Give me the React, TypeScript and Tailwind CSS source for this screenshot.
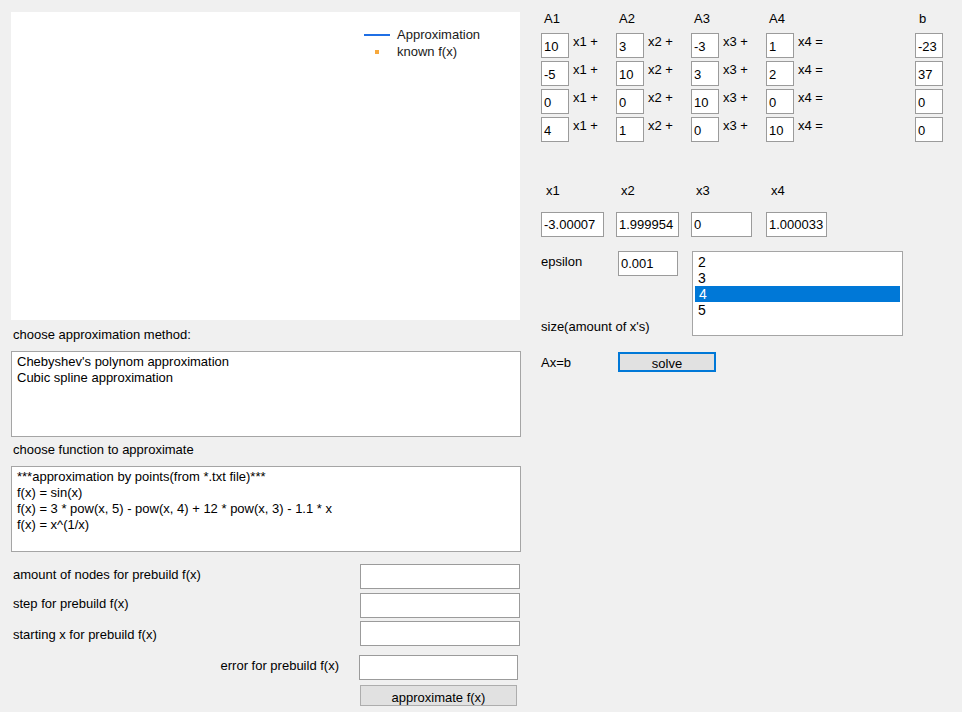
import React from 'react';

const tb = 'border border-[#9b9b9b] bg-white h-[25px] px-[2px] flex items-center leading-none';

function MatrixCell({ value, label }: { value: string; label?: string }) {
  return (
    <div className="flex items-start w-[75px] shrink-0">
      <div className="border border-[#9b9b9b] bg-white w-[28px] h-[25px] pl-[2px] pt-[5px] leading-[16px]">{value}</div>
      {label && <span className="ml-[4px] pt-[1px] whitespace-nowrap leading-[16px]">{label}</span>}
    </div>
  );
}

const matrix = [
  ['10', '3', '-3', '1', '-23'],
  ['-5', '10', '3', '2', '37'],
  ['0', '0', '10', '0', '0'],
  ['4', '1', '0', '10', '0'],
];

export default function App() {
  return (
    <div className="w-[962px] h-[712px] bg-[#f0f0f0] text-[13px] text-black font-['Liberation_Sans',Arial,sans-serif] flex overflow-hidden">
      {/* left side */}
      <div className="pl-[11px] pt-[12px] w-[541px] shrink-0 flex flex-col">
        <div className="relative w-[509px] h-[308px] bg-white">
          <div className="absolute left-[353px] top-[14px] flex flex-col leading-[17px] text-[#1a1a1a]">
            <div className="flex items-center gap-[7px]">
              <span className="block w-[26px] h-[2px] bg-[#1f6fe5]" />
              <span>Approximation</span>
            </div>
            <div className="flex items-center gap-[7px]">
              <span className="w-[26px] flex justify-center">
                <span className="block w-[4px] h-[4px] bg-[#f7a83c]" />
              </span>
              <span>known f(x)</span>
            </div>
          </div>
        </div>

        <div className="mt-[7px] ml-[2px] leading-[16px]">choose approximation method:</div>
        <div className="mt-[8px] w-[510px] h-[86px] border border-[#a5a5a5] bg-white px-[5px] pt-[2px] leading-[16px]">
          <div>Chebyshev's polynom approximation</div>
          <div>Cubic spline approximation</div>
        </div>

        <div className="mt-[5px] ml-[2px] leading-[16px]">choose function to approximate</div>
        <div className="mt-[8px] w-[510px] h-[86px] border border-[#a5a5a5] bg-white px-[5px] pt-[2px] leading-[16px]">
          <div>***approximation by points(from *.txt file)***</div>
          <div>f(x) = sin(x)</div>
          <div>f(x) = 3 * pow(x, 5) - pow(x, 4) + 12 * pow(x, 3) - 1.1 * x</div>
          <div>f(x) = x^(1/x)</div>
        </div>

        <div className="mt-[12px] flex items-start">
          <div className="w-[349px] pl-[2px] pt-[3px] leading-[16px]">amount of nodes for prebuild f(x)</div>
          <div className={tb + ' w-[160px]'} />
        </div>
        <div className="mt-[4px] flex items-start">
          <div className="w-[349px] pl-[2px] pt-[3px] leading-[16px]">step for prebuild f(x)</div>
          <div className={tb + ' w-[160px]'} />
        </div>
        <div className="mt-[3px] flex items-start">
          <div className="w-[349px] pl-[2px] pt-[6px] leading-[16px]">starting x for prebuild f(x)</div>
          <div className={tb + ' w-[160px]'} />
        </div>
        <div className="mt-[9px] flex items-start">
          <div className="w-[348px] pr-[20px] pt-[3px] leading-[16px] text-right">error for prebuild f(x)</div>
          <div className={tb + ' w-[159px]'} />
        </div>
        <div className="mt-[5px] ml-[349px] w-[157px] h-[21px] border border-[#adadad] bg-[#e1e1e1] flex justify-center overflow-hidden leading-[16px] pt-[4px]">
          approximate f(x)
        </div>
      </div>

      {/* right side */}
      <div className="pt-[11px] flex flex-col">
        <div className="flex leading-[16px]">
          <span className="w-[75px] pl-[3px]">A1</span>
          <span className="w-[75px] pl-[3px]">A2</span>
          <span className="w-[75px] pl-[3px]">A3</span>
          <span className="w-[149px] pl-[3px]">A4</span>
          <span className="pl-[4px]">b</span>
        </div>
        <div className="mt-[6px] flex flex-col">
          {matrix.map((r, i) => (
            <div key={i} className="h-[28px] flex">
              <MatrixCell value={r[0]} label="x1 +" />
              <MatrixCell value={r[1]} label="x2 +" />
              <MatrixCell value={r[2]} label="x3 +" />
              <div className="w-[149px] shrink-0">
                <MatrixCell value={r[3]} label="x4 =" />
              </div>
              <MatrixCell value={r[4]} />
            </div>
          ))}
        </div>

        <div className="mt-[38px] flex leading-[16px]">
          <span className="w-[75px] pl-[5px]">x1</span>
          <span className="w-[75px] pl-[5px]">x2</span>
          <span className="w-[75px] pl-[5px]">x3</span>
          <span className="w-[75px] pl-[5px]">x4</span>
        </div>
        <div className="mt-[13px] flex">
          <div className="w-[75px]"><div className={tb + ' w-[63px] overflow-hidden whitespace-nowrap'}>-3.00007</div></div>
          <div className="w-[75px]"><div className={tb + ' w-[63px] overflow-hidden whitespace-nowrap'}>1.999954</div></div>
          <div className="w-[75px]"><div className={tb + ' w-[61px] overflow-hidden whitespace-nowrap'}>0</div></div>
          <div className="w-[75px]"><div className={tb + ' w-[61px] overflow-hidden whitespace-nowrap'}>1.000033</div></div>
        </div>

        <div className="mt-[14px] flex items-start">
          <div className="w-[76px] h-[85px] flex flex-col justify-between leading-[16px] pt-[3px] pb-[1px]">
            <span>epsilon</span>
            <span className="whitespace-nowrap">size(amount of x's)</span>
          </div>
          <div className={tb + ' ml-[1px] w-[60px] h-[24px]'}>0.001</div>
          <div className="ml-[14px] w-[211px] h-[85px] border border-[#a5a5a5] bg-white p-[1px] pt-[2px] text-[14px] leading-[16px]">
            <div className="pl-[4px]">2</div>
            <div className="pl-[4px]">3</div>
            <div className="pl-[4px] mx-[1px] bg-[#0078d7] text-white">4</div>
            <div className="pl-[4px]">5</div>
          </div>
        </div>

        <div className="mt-[16px] flex items-start">
          <div className="w-[77px] pt-[3px] leading-[16px]">Ax=b</div>
          <div className="w-[98px] h-[20px] border-2 border-[#0078d7] bg-[#e1e1e1] flex justify-center overflow-hidden leading-[16px] pt-[2px]">
            solve
          </div>
        </div>
      </div>
    </div>
  );
}
